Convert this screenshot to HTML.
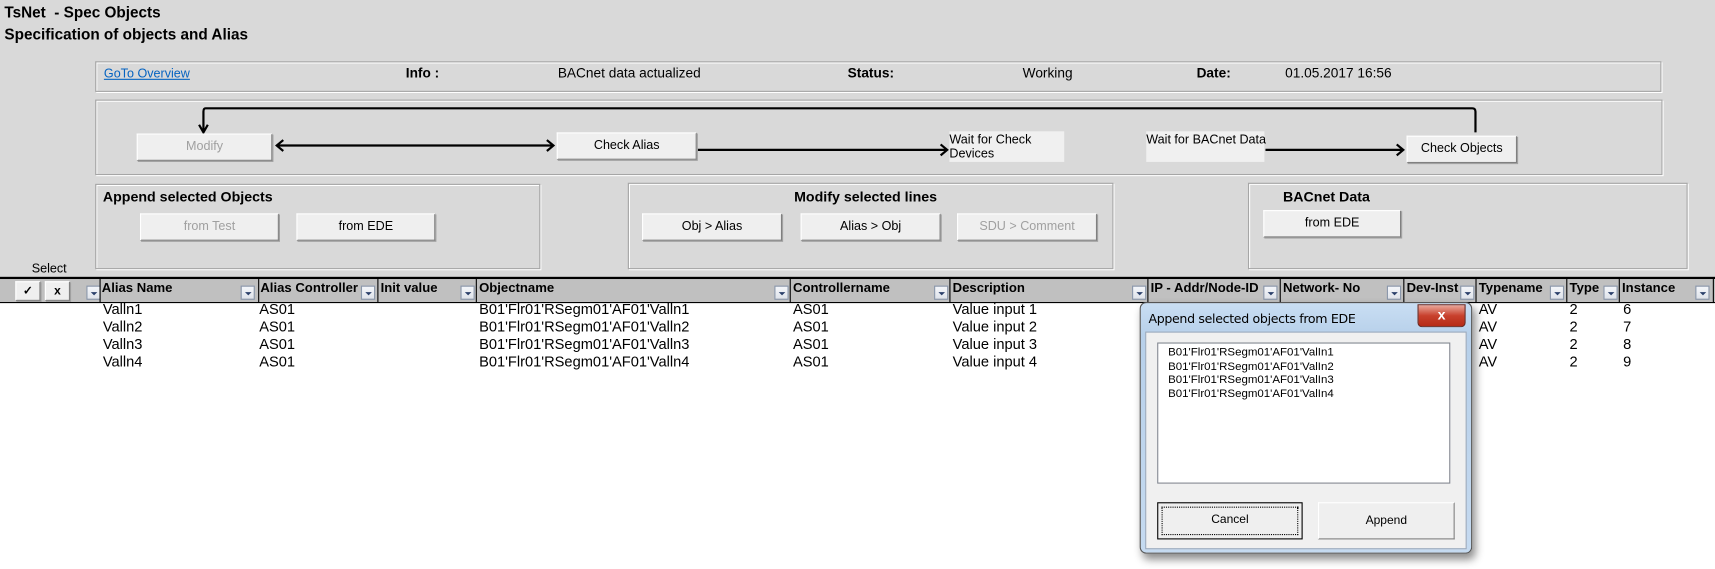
<!DOCTYPE html>
<html><head><meta charset="utf-8"><style>
html,body{margin:0;padding:0;width:1715px;height:569px;overflow:hidden;background:#fff;}
#w{position:absolute;left:0;top:0;width:1568px;height:520px;transform:scale(1.09375,1.0942);transform-origin:0 0;font-family:"Liberation Sans",Arial,sans-serif;color:#000;}
.a{position:absolute;white-space:nowrap;}
.bg{position:absolute;left:0;top:0;width:1568px;height:276px;background:#d9d9d9;}
.box{position:absolute;border:1px solid #a6a6a6;box-shadow:inset 1px 1px 0 #fff,1px 1px 0 #fff;}
.btn{position:absolute;background:#efefef;border:1px solid #fff;border-right-color:#808080;border-bottom-color:#808080;box-shadow:1px 1px 0 #a0a0a0;font-size:11.5px;text-align:center;box-sizing:border-box;}
.dis{color:#a0a0a0;}
.b{font-weight:bold;}
.hdr{position:absolute;left:0;top:253px;width:1568px;height:21px;background:#c0c0c0;border-top:2px solid #000;border-bottom:1px solid #000;}
.col{position:absolute;top:0;height:21px;border-left:1px solid #000;}
.dd{position:absolute;top:6px;width:13px;height:13px;background:linear-gradient(#f4f6fa,#dfe3ea);border:1px solid #8a97ab;box-sizing:border-box;}
.dd:after{content:"";position:absolute;left:3px;top:5px;border-left:3px solid transparent;border-right:3px solid transparent;border-top:3px solid #2a3f6a;}
.ht{position:absolute;top:1px;font-size:12px;font-weight:bold;}
.row{font-size:13.4px;}
</style></head><body><div id="w">
<div class="bg"></div>
<div class="a b" style="left:4px;top:3px;font-size:14px;">TsNet&nbsp; - Spec Objects</div>
<div class="a b" style="left:4px;top:23px;font-size:14px;">Specification of objects and Alias</div>

<div class="box" style="left:87px;top:56px;width:1430px;height:26px;"></div>
<div class="a" style="left:95px;top:62px;font-size:11.5px;color:#0563c1;text-decoration:underline;">GoTo Overview</div>
<div class="a b" style="left:371px;top:60px;font-size:12.5px;">Info :</div>
<div class="a" style="left:510px;top:60px;font-size:12.5px;">BACnet data actualized</div>
<div class="a b" style="left:775px;top:60px;font-size:12.5px;">Status:</div>
<div class="a" style="left:935px;top:60px;font-size:12.5px;">Working</div>
<div class="a b" style="left:1094px;top:60px;font-size:12.5px;">Date:</div>
<div class="a" style="left:1175px;top:60px;font-size:12.5px;">01.05.2017 16:56</div>

<div class="box" style="left:87px;top:91px;width:1431px;height:67px;"></div>
<svg class="a" style="left:0;top:0" width="1568" height="260">
<g stroke="#000" stroke-width="2" fill="none">
<path d="M1349 121 V102 Q1349 99 1346 99 H188 Q186 99 186 102 V119"/>
<path d="M182 114 L186 121 L190 114"/>
<path d="M253 133 H506"/><path d="M259 128 L253 133 L259 138"/><path d="M500 128 L506 133 L500 138"/>
<path d="M638 137 H866"/><path d="M860 132 L866 137 L860 142"/>
<path d="M1157 137 H1283"/><path d="M1277 132 L1283 137 L1277 142"/>
</g></svg>
<div class="btn dis" style="left:125px;top:122px;width:124px;height:25px;line-height:23px;">Modify</div>
<div class="btn" style="left:509px;top:121px;width:128px;height:25px;line-height:23px;">Check Alias</div>
<div class="a" style="left:868px;top:120px;width:105px;height:28px;background:#f0f0f0;font-size:11.5px;line-height:13px;white-space:normal;padding-top:2px;box-sizing:border-box;">Wait for Check Devices</div>
<div class="a" style="left:1048px;top:120px;width:108px;height:28px;background:#f0f0f0;font-size:11.5px;line-height:13px;padding-top:2px;box-sizing:border-box;">Wait for BACnet Data</div>
<div class="btn" style="left:1286px;top:124px;width:101px;height:25px;line-height:23px;">Check Objects</div>

<div class="box" style="left:87px;top:168px;width:405px;height:76px;"></div>
<div class="a b" style="left:94px;top:172px;font-size:13px;">Append selected Objects</div>
<div class="btn dis" style="left:128px;top:195px;width:127px;height:25px;line-height:23px;">from Test</div>
<div class="btn" style="left:271px;top:195px;width:127px;height:25px;line-height:23px;">from EDE</div>

<div class="box" style="left:574px;top:167px;width:442px;height:77px;"></div>
<div class="a b" style="left:726px;top:172px;font-size:13px;">Modify selected lines</div>
<div class="btn" style="left:587px;top:195px;width:128px;height:25px;line-height:23px;">Obj &gt; Alias</div>
<div class="btn" style="left:732px;top:195px;width:128px;height:25px;line-height:23px;">Alias &gt; Obj</div>
<div class="btn dis" style="left:875px;top:195px;width:128px;height:25px;line-height:23px;">SDU &gt; Comment</div>

<div class="box" style="left:1141px;top:167px;width:400px;height:77px;"></div>
<div class="a b" style="left:1173px;top:172px;font-size:13px;">BACnet Data</div>
<div class="btn" style="left:1155px;top:192px;width:126px;height:25px;line-height:23px;">from EDE</div>

<div class="a" style="left:29px;top:240px;font-size:11.5px;">Select</div>

<div class="hdr">
<div class="btn b" style="left:14px;top:2px;width:23px;height:18px;line-height:16px;font-size:11px;">✓</div>
<div class="btn b" style="left:41px;top:2px;width:23px;height:18px;line-height:16px;font-size:11px;">x</div>
<div class="dd" style="left:79px"></div>
<div class="col" style="left:91px"></div><div class="ht" style="left:93px">Alias Name</div><div class="dd" style="left:220px"></div>
<div class="col" style="left:236px"></div><div class="ht" style="left:238px">Alias Controller</div><div class="dd" style="left:330px"></div>
<div class="col" style="left:345px"></div><div class="ht" style="left:348px">Init value</div><div class="dd" style="left:421px"></div>
<div class="col" style="left:435px"></div><div class="ht" style="left:438px">Objectname</div><div class="dd" style="left:708px"></div>
<div class="col" style="left:722px"></div><div class="ht" style="left:725px">Controllername</div><div class="dd" style="left:854px"></div>
<div class="col" style="left:868px"></div><div class="ht" style="left:871px">Description</div><div class="dd" style="left:1035px"></div>
<div class="col" style="left:1049px"></div><div class="ht" style="left:1052px">IP - Addr/Node-ID</div><div class="dd" style="left:1155px"></div>
<div class="col" style="left:1170px"></div><div class="ht" style="left:1173px">Network- No</div><div class="dd" style="left:1268px"></div>
<div class="col" style="left:1283px"></div><div class="ht" style="left:1286px">Dev-Inst</div><div class="dd" style="left:1335px"></div>
<div class="col" style="left:1349px"></div><div class="ht" style="left:1352px">Typename</div><div class="dd" style="left:1417px"></div>
<div class="col" style="left:1432px"></div><div class="ht" style="left:1435px">Type</div><div class="dd" style="left:1466px"></div>
<div class="col" style="left:1480px"></div><div class="ht" style="left:1483px">Instance</div><div class="dd" style="left:1550px"></div>
<div class="col" style="left:1566px"></div>
</div>

<div class="row">
<div class="a" style="left:94px;top:275px">Valln1</div><div class="a" style="left:237px;top:275px">AS01</div><div class="a" style="left:438px;top:275px">B01'Flr01'RSegm01'AF01'Valln1</div><div class="a" style="left:725px;top:275px">AS01</div><div class="a" style="left:871px;top:275px">Value input 1</div><div class="a" style="left:1352px;top:275px">AV</div><div class="a" style="left:1435px;top:275px">2</div><div class="a" style="left:1484px;top:275px">6</div>
<div class="a" style="left:94px;top:291px">Valln2</div><div class="a" style="left:237px;top:291px">AS01</div><div class="a" style="left:438px;top:291px">B01'Flr01'RSegm01'AF01'Valln2</div><div class="a" style="left:725px;top:291px">AS01</div><div class="a" style="left:871px;top:291px">Value input 2</div><div class="a" style="left:1352px;top:291px">AV</div><div class="a" style="left:1435px;top:291px">2</div><div class="a" style="left:1484px;top:291px">7</div>
<div class="a" style="left:94px;top:307px">Valln3</div><div class="a" style="left:237px;top:307px">AS01</div><div class="a" style="left:438px;top:307px">B01'Flr01'RSegm01'AF01'Valln3</div><div class="a" style="left:725px;top:307px">AS01</div><div class="a" style="left:871px;top:307px">Value input 3</div><div class="a" style="left:1352px;top:307px">AV</div><div class="a" style="left:1435px;top:307px">2</div><div class="a" style="left:1484px;top:307px">8</div>
<div class="a" style="left:94px;top:323px">Valln4</div><div class="a" style="left:237px;top:323px">AS01</div><div class="a" style="left:438px;top:323px">B01'Flr01'RSegm01'AF01'Valln4</div><div class="a" style="left:725px;top:323px">AS01</div><div class="a" style="left:871px;top:323px">Value input 4</div><div class="a" style="left:1352px;top:323px">AV</div><div class="a" style="left:1435px;top:323px">2</div><div class="a" style="left:1484px;top:323px">9</div>
</div>

<div class="a" style="left:1042px;top:276px;width:302px;height:228px;border:1px solid #555;border-radius:6px;background:linear-gradient(#c9def3,#b7d0ea 30px,#c5daf0);box-shadow:3px 5px 8px rgba(0,0,0,.45);">
<div class="a" style="left:7px;top:7px;font-size:11.5px;font-family:'DejaVu Sans',sans-serif;letter-spacing:-0.3px;">Append selected objects from EDE</div>
<div class="a" style="left:253px;top:1px;width:42px;height:19px;border:1px solid #6b2a22;border-radius:0 0 4px 4px;background:linear-gradient(#e9a79a,#c8412d 50%,#b52a16);color:#fff;font-weight:bold;text-align:center;font-size:13px;line-height:18px;">x</div>
<div class="a" style="left:4px;top:26px;width:292px;height:197px;background:#f0f0f0;border:1px solid #98a8bc;">
<div class="a" style="left:10px;top:9px;height:129px;background:#fff;border:1px solid #828790;font-size:10.5px;line-height:12.5px;padding:2px 0 0 9px;box-sizing:border-box;width:268px;">B01'Flr01'RSegm01'AF01'ValIn1<br>B01'Flr01'RSegm01'AF01'ValIn2<br>B01'Flr01'RSegm01'AF01'ValIn3<br>B01'Flr01'RSegm01'AF01'ValIn4</div>
<div class="a" style="left:10px;top:155px;width:133px;height:34px;border:1px solid #000;box-sizing:border-box;background:#efefef;font-size:11px;text-align:center;line-height:30px;"><div style="position:absolute;left:3px;top:3px;right:3px;bottom:3px;border:1px dotted #000;"></div>Cancel</div>
<div class="a" style="left:157px;top:155px;width:125px;height:34px;border:1px solid #fff;border-right-color:#808080;border-bottom-color:#808080;box-sizing:border-box;background:#efefef;font-size:11px;text-align:center;line-height:32px;">Append</div>
</div>
</div>
</div></body></html>
